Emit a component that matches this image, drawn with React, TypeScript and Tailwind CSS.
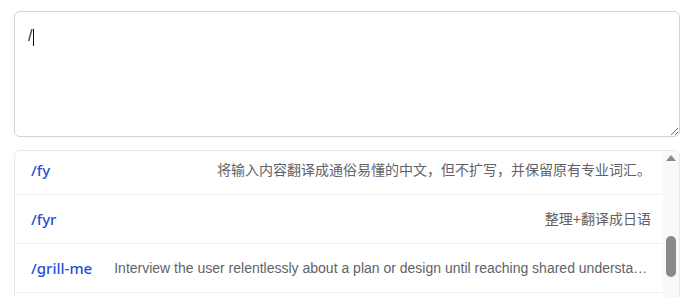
import React from "react";

type Command = {
  name: string;
  description: string;
};

const commands: Command[] = [
  { name: "/fy", description: "将输入内容翻译成通俗易懂的中文，但不扩写，并保留原有专业词汇。" },
  { name: "/fyr", description: "整理+翻译成日语" },
  {
    name: "/grill-me",
    description:
      "Interview the user relentlessly about a plan or design until reaching shared understanding, resolving each branch of the decision tree.",
  },
  { name: "/review", description: "Review the current changes" },
];

const font = {
  fontFamily: '"Segoe UI", "Liberation Sans", "Noto Sans CJK SC", sans-serif',
};

const nameFont = {
  fontFamily: '"Noto Sans", "Liberation Sans", sans-serif',
};

export default function App() {
  return (
    <div className="w-[690px] h-[297px] overflow-hidden bg-white pl-[14px] pr-[10px] pt-[11px]" style={font}>
      <div className="relative">
        <textarea
          autoFocus
          defaultValue="/"
          className="block w-full h-[126px] rounded-md border border-[#d4d4d8] px-[13px] py-[12px] text-[16px] leading-6 text-[#333] caret-transparent outline-none"
          style={font}
        />
        {/* caret */}
        <div className="absolute left-[19px] top-[18px] h-[17px] w-px bg-[#111]" />
      </div>

      <div className="mt-[13px] flex h-[170px] rounded-md border border-[#e8e8eb] overflow-hidden">
        <div className="flex-1 min-w-0 overflow-hidden">
          <div className="-mt-[5px]">
            {commands.map((c) => (
              <div
                key={c.name}
                className="flex items-center gap-[22px] h-[49px] border-b border-[#f1f1f3] pl-4 pr-3"
              >
                <span className="shrink-0 text-[15px] font-medium text-[#1f4fd6]" style={nameFont}>
                  {c.name}
                </span>
                <span className="flex-1 min-w-0 truncate text-right text-[14px] text-[#5f6368]">
                  {c.description}
                </span>
              </div>
            ))}
          </div>
        </div>

        {/* scrollbar */}
        <div className="relative w-[16px] shrink-0 bg-[#f9f9f9]">
          <div className="mx-auto mt-[4px] h-0 w-0 border-x-[5px] border-b-[6px] border-x-transparent border-b-[#8a8a8a]" />
          <div className="absolute left-[3px] top-[85px] h-[41px] w-[10px] rounded-full bg-[#8a8a8a]" />
        </div>
      </div>
    </div>
  );
}
